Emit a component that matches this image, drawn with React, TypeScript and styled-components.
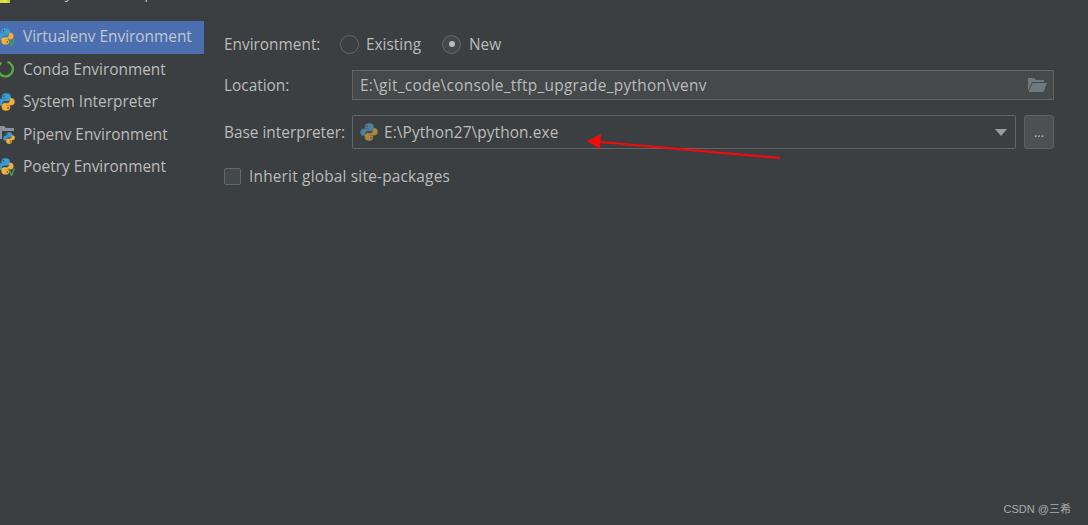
import React from "react";
import styled, { createGlobalStyle } from "styled-components";

const GlobalStyle = createGlobalStyle`
  html, body {
    margin: 0;
    padding: 0;
    background: #3c3f41;
  }

  * {
    box-sizing: border-box;
  }
`;

const Page = styled.div`
  width: 1088px;
  height: 525px;
  position: relative;
  overflow: hidden;
  background: #3c3f41;
  color: #bbbbbb;
  font-family: "Open Sans", "Noto Sans", sans-serif;
  font-size: 15.4px;
`;

const TitleBar = styled.div`
  height: 21px;
  position: relative;
  overflow: hidden;
`;

const TitleIcon = styled.span`
  position: absolute;
  left: 0;
  top: 0;
  width: 10px;
  height: 3px;
  background: linear-gradient(90deg, #d8d83a, #e8e23c 60%, #a8c83c);
`;

const TitleText = styled.span`
  position: absolute;
  left: 23px;
  top: -17px;
  line-height: 20px;
  white-space: nowrap;
`;

const Body = styled.div`
  display: flex;
`;

const Sidebar = styled.ul`
  width: 204px;
  margin: 0;
  padding: 0;
  list-style: none;
  flex: none;
`;

const SideItem = styled.li<{ $active?: boolean }>`
  height: 32.5px;
  padding-bottom: 1px;
  display: flex;
  align-items: center;
  gap: 8px;
  background: ${(p) => (p.$active ? "#4b6eaf" : "transparent")};
  color: ${(p) => (p.$active ? "#c0c6d0" : "#bbbbbb")};
  white-space: nowrap;
`;

const IconSlot = styled.span`
  width: 15px;
  height: 20px;
  overflow: hidden;
  flex: none;
  display: flex;
  justify-content: flex-end;
  align-items: center;
`;

const Form = styled.div`
  flex: 1;
  min-width: 0;
  padding: 7px 34px 0 20px;
  display: flex;
  flex-direction: column;
`;

const Row = styled.div<{ $height: number; $mt?: number }>`
  display: flex;
  align-items: center;
  height: ${(p) => p.$height}px;
  margin-top: ${(p) => p.$mt ?? 0}px;
  white-space: nowrap;
`;

const Label = styled.label<{ $width: number }>`
  width: ${(p) => p.$width}px;
  flex: none;
`;

const RadioOption = styled.span<{ $width: number; $gap: number }>`
  width: ${(p) => p.$width}px;
  display: flex;
  align-items: center;
  gap: ${(p) => p.$gap}px;
  flex: none;
`;

const Radio = styled.span<{ $checked?: boolean }>`
  width: 19px;
  height: 19px;
  border-radius: 50%;
  border: 1px solid #646769;
  background: ${(p) => (p.$checked ? "#43494a" : "#3c3f41")};
  display: flex;
  align-items: center;
  justify-content: center;
  flex: none;

  &::after {
    content: "";
    display: ${(p) => (p.$checked ? "block" : "none")};
    width: 6px;
    height: 6px;
    border-radius: 50%;
    background: #bbbbbb;
  }
`;

const LocationField = styled.div`
  flex: 1;
  height: 30px;
  border: 1px solid #646464;
  background: #45494a;
  display: flex;
  align-items: center;
  justify-content: space-between;
  padding: 0 6px 0 7px;
  letter-spacing: 0.29px;
`;

const Select = styled.div`
  width: 664px;
  height: 34px;
  margin-left: -1px;
  border: 1px solid #646464;
  border-radius: 2px;
  display: flex;
  align-items: center;
  gap: 6px;
  padding: 0 8px 0 7px;
  flex: none;
`;

const SelectValue = styled.span`
  flex: 1;
  letter-spacing: 0.1px;
`;

const Caret = styled.span`
  width: 0;
  height: 0;
  border-left: 6px solid transparent;
  border-right: 6px solid transparent;
  border-top: 7px solid #9a9da0;
`;

const BrowseButton = styled.button`
  width: 30px;
  height: 34px;
  margin-left: 8px;
  padding: 0;
  border: 1px solid #5e6060;
  border-radius: 3px;
  background: #4c5052;
  color: #b4c0cc;
  font: inherit;
  font-size: 13px;
  flex: none;
`;

const Checkbox = styled.span`
  width: 17px;
  height: 17px;
  border: 1px solid #646769;
  border-radius: 2px;
  background: #43494a;
  margin-right: 8px;
  flex: none;
`;

const CheckboxLabel = styled.span`
  letter-spacing: 0.2px;
`;

const Watermark = styled.div`
  position: absolute;
  right: 17px;
  bottom: 9px;
  font-family: "Liberation Sans", "Noto Sans CJK SC", sans-serif;
  font-size: 11px;
  color: #a9abad;
`;

const ArrowLayer = styled.svg`
  position: absolute;
  left: 0;
  top: 0;
  pointer-events: none;
`;

const SNAKE_TOP =
  "M8 .5C5.4.5 4.6 1.5 4.6 3v1.7H8v.6H3C1.5 5.3.5 6.4.5 8.2c0 1.9 1 3 2.3 3h1.5V9.3c0-1.3 1.1-2.3 2.4-2.3h3.4c1.1 0 1.9-.9 1.9-2V3c0-1.5-1.3-2.5-3.5-2.5z";
const SNAKE_BOTTOM =
  "M8 15.5c2.6 0 3.4-1 3.4-2.5v-1.7H8v-.6h5c1.5 0 2.500-1.100 2.500-2.900 0-1.900-1-3-2.300-3h-1.500v1.900c0 1.300-1.100 2.300-2.400 2.300H6.400c-1.100 0-1.900.9-1.900 2V13c0 1.500 1.300 2.500 3.500 2.500z";

const Snakes = ({ muted = false }: { muted?: boolean }) => {
  const blue = muted ? "#4f7f9c" : "#389fd6";
  const yellow = muted ? "#a8893f" : "#f4af3d";
  return (
    <>
      <path d={SNAKE_TOP} fill={blue} stroke={blue} strokeWidth=".5" />
      <path d={SNAKE_BOTTOM} fill={yellow} stroke={yellow} strokeWidth=".5" />
      <circle cx="6.200" cy="2.600" r=".7" fill="#3c3f41" />
      <circle cx="9.800" cy="13.400" r=".7" fill="#3c3f41" />
    </>
  );
};

const Python = ({ muted = false }: { muted?: boolean }) => (
  <svg width="18" height="18" viewBox="0 0 16 16" style={{ flex: "none" }}>
    <Snakes muted={muted} />
  </svg>
);

const VenvPython = () => (
  <svg width="18" height="18" viewBox="0 0 18 18" style={{ flex: "none" }}>
    <g transform="scale(1.050)">
      <Snakes />
    </g>
    <path d="M11.500 10.500l3 7 3-7" fill="none" stroke="#499c54" strokeWidth="1.500" />
  </svg>
);

const CondaRing = () => (
  <svg width="18" height="18" viewBox="0 0 18 18" style={{ flex: "none" }}>
    <circle
      cx="8.500"
      cy="9"
      r="7.400"
      fill="none"
      stroke="#59a83f"
      strokeWidth="2.400"
      strokeDasharray="40 7"
      transform="rotate(-75 8.500 9)"
    />
  </svg>
);

const PipenvIcon = () => (
  <svg width="18" height="20" viewBox="0 0 18 20" style={{ flex: "none" }}>
    <path d="M0 2h7l2 2h8v11H0z" fill="#8c9398" />
    <path d="M5 7h13v13H5z" fill="#3c3f41" />
    <g transform="translate(6 8) scale(.75)">
      <Snakes />
    </g>
  </svg>
);

const FolderOpen = () => (
  <svg width="20" height="16" viewBox="0 0 20 16" style={{ flex: "none" }}>
    <path d="M1 14V1h6l2 2h8v2H5L1 14z" fill="#6e7a80" />
    <path d="M5.500 6H20l-3.500 9H1.500z" fill="#6e7a80" />
  </svg>
);

const sideItems = [
  { label: "Virtualenv Environment", icon: <VenvPython />, active: true },
  { label: "Conda Environment", icon: <CondaRing /> },
  { label: "System Interpreter", icon: <Python /> },
  { label: "Pipenv Environment", icon: <PipenvIcon /> },
  { label: "Poetry Environment", icon: <VenvPython /> },
];

export default function App() {
  return (
    <Page>
      <GlobalStyle />
      <TitleBar>
        <TitleIcon />
        <TitleText>Add Python Interpreter</TitleText>
      </TitleBar>
      <Body>
        <Sidebar>
          {sideItems.map((item) => (
            <SideItem key={item.label} $active={item.active}>
              <IconSlot>{item.icon}</IconSlot>
              {item.label}
            </SideItem>
          ))}
        </Sidebar>
        <Form>
          <Row $height={32}>
            <Label $width={116}>Environment:</Label>
            <RadioOption $width={102} $gap={7}>
              <Radio />
              Existing
            </RadioOption>
            <RadioOption $width={70} $gap={8}>
              <Radio $checked />
              New
            </RadioOption>
          </Row>
          <Row $height={30} $mt={10}>
            <Label $width={128}>Location:</Label>
            <LocationField>
              E:\git_code\console_tftp_upgrade_python\venv
              <FolderOpen />
            </LocationField>
          </Row>
          <Row $height={34} $mt={15}>
            <Label $width={129}>Base interpreter:</Label>
            <Select>
              <Python muted />
              <SelectValue>E:\Python27\python.exe</SelectValue>
              <Caret />
            </Select>
            <BrowseButton>...</BrowseButton>
          </Row>
          <Row $height={20} $mt={17}>
            <Checkbox />
            <CheckboxLabel>Inherit global site-packages</CheckboxLabel>
          </Row>
        </Form>
      </Body>
      <ArrowLayer width="1088" height="525">
        <path d="M780 158L600 142" stroke="#f50a0a" strokeWidth="2.200" fill="none" />
        <path d="M587 141l14-7-1 15z" fill="#f50a0a" />
      </ArrowLayer>
      <Watermark>CSDN @三希</Watermark>
    </Page>
  );
}
